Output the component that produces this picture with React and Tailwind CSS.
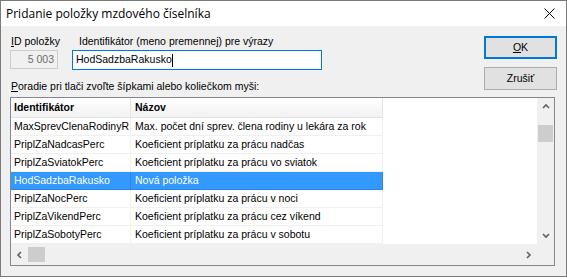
import React from "react";

const rows = [
  ["MaxSprevClenaRodinyR", "Max. počet dní sprev. člena rodiny u lekára za rok"],
  ["PriplZaNadcasPerc", "Koeficient príplatku za prácu nadčas"],
  ["PriplZaSviatokPerc", "Koeficient príplatku za prácu vo sviatok"],
  ["HodSadzbaRakusko", "Nová položka", true],
  ["PriplZaNocPerc", "Koeficient príplatku za prácu v noci"],
  ["PriplZaVikendPerc", "Koeficient príplatku za prácu cez víkend"],
  ["PriplZaSobotyPerc", "Koeficient príplatku za prácu v sobotu"],
];

const Chevron = ({ dir }) => {
  const paths = {
    up: "M1 5 L4 2 L7 5",
    down: "M1 2 L4 5 L7 2",
    left: "M5 1 L2 4 L5 7",
    right: "M2 1 L5 4 L2 7",
  };
  return (
    <svg width="8" height="8" viewBox="0 0 8 8">
      <path d={paths[dir]} fill="none" stroke="#606060" strokeWidth="1.6" />
    </svg>
  );
};

export default function App() {
  return (
    <div className="w-[567px] h-[279px] bg-white font-['Liberation_Sans',Arial,sans-serif] text-[10.5px] text-black">
      <div className="w-[567px] h-[277px] border border-[#7a7a7a] bg-[#f0f0f0] flex flex-col">
        {/* title bar */}
        <div className="h-[25px] bg-white flex items-center justify-between pl-[5px] pr-[11px]">
          <span className="font-['Open_Sans',sans-serif] text-[12px] text-[#000]">
            Pridanie položky mzdového číselníka
          </span>
          <svg width="11" height="11" viewBox="0 0 11 11">
            <path d="M0.5 0.5 L10.5 10.5 M10.5 0.5 L0.5 10.5" stroke="#000" strokeWidth="1" />
          </svg>
        </div>

        <div className="flex-1 pl-[9px] pr-[9px] pt-[8px]">
          <div className="h-[45px] flex justify-between items-start">
            <div className="flex">
              <div className="w-[48px]">
                <div className="h-[15px] leading-[15px] pl-[1px] whitespace-nowrap">
                  <u>I</u>D položky
                </div>
                <div className="mt-[1px] h-[19px] border border-[#cccccc] bg-[#f0f0f0] text-[#6d6d6d] flex items-center justify-end pr-[3px]">
                  5 003
                </div>
              </div>
              <div className="ml-[14px] w-[250px]">
                <div className="h-[15px] leading-[15px] pl-[7px] whitespace-nowrap">
                  Identifikátor (meno premennej) pre výrazy
                </div>
                <div className="mt-[1px] h-[20px] border border-[#0078d7] bg-white flex items-center pl-[3px]">
                  HodSadzbaRakusko
                  <span className="inline-block w-[1px] h-[13px] bg-black" />
                </div>
              </div>
            </div>
            <div className="flex flex-col gap-[8px] mt-[2px]">
              <div className="w-[73px] h-[23px] border-2 border-[#0078d7] bg-[#e1e1e1] flex items-center justify-center">
                <span>
                  <u>O</u>K
                </span>
              </div>
              <div className="w-[73px] h-[23px] border border-[#adadad] bg-[#e1e1e1] flex items-center justify-center">
                Zrušiť
              </div>
            </div>
          </div>

          <div className="h-[15px] leading-[15px] pl-[1px]">
            <u>P</u>oradie pri tlači zvoľte šípkami alebo koliečkom myši:
          </div>

          {/* list box */}
          <div className="mt-[3px] w-[545px] h-[169px] border border-[#828790] bg-white flex flex-col">
            <div className="flex h-[146px]">
              <div className="w-[526px]">
                <div className="flex h-[20px] w-[372px] bg-gradient-to-b from-white to-[#f2f2f2] border-b border-[#e3e3e3] font-bold">
                  <div className="w-[120px] border-r border-[#e3e3e3] pl-[3px] flex items-center">
                    Identifikátor
                  </div>
                  <div className="flex-1 border-r border-[#e3e3e3] pl-[4px] flex items-center">
                    Názov
                  </div>
                </div>
                {rows.map(([id, name, sel]) => (
                  <div
                    key={id}
                    className={
                      sel
                        ? "flex h-[18px] w-[372px] bg-[#3399ff] text-white border-b border-[#2a86e6]"
                        : "flex h-[18px] w-[372px] border-b border-[#f0f0f0]"
                    }
                  >
                    <div
                      className={
                        sel
                          ? "w-[120px] border-r border-[#2a86e6] pl-[3px] flex items-center whitespace-nowrap overflow-hidden"
                          : "w-[120px] border-r border-[#f0f0f0] pl-[3px] flex items-center whitespace-nowrap overflow-hidden"
                      }
                    >
                      {id}
                    </div>
                    <div
                      className={
                        sel
                          ? "flex-1 border-r border-[#2a86e6] pl-[4px] flex items-center whitespace-nowrap overflow-hidden"
                          : "flex-1 border-r border-[#f0f0f0] pl-[4px] flex items-center whitespace-nowrap overflow-hidden"
                      }
                    >
                      {name}
                    </div>
                  </div>
                ))}
              </div>
              {/* vertical scrollbar */}
              <div className="w-[17px] bg-[#f0f0f0] flex flex-col items-center">
                <div className="h-[17px] flex items-center justify-center">
                  <Chevron dir="up" />
                </div>
                <div className="mt-[10px] w-[15px] h-[17px] bg-[#cdcdcd]" />
                <div className="flex-1" />
                <div className="h-[17px] flex items-center justify-center">
                  <Chevron dir="down" />
                </div>
              </div>
            </div>
            {/* horizontal scrollbar */}
            <div className="flex flex-1">
              <div className="w-[526px] bg-[#f0f0f0] flex items-center">
                <div className="w-[17px] flex items-center justify-center">
                  <Chevron dir="left" />
                </div>
                <div className="w-[17px] h-[15px] bg-[#cdcdcd]" />
                <div className="flex-1" />
                <div className="w-[17px] flex items-center justify-center">
                  <Chevron dir="right" />
                </div>
              </div>
              <div className="flex-1 bg-[#f0f0f0]" />
            </div>
          </div>
        </div>
      </div>
    </div>
  );
}
